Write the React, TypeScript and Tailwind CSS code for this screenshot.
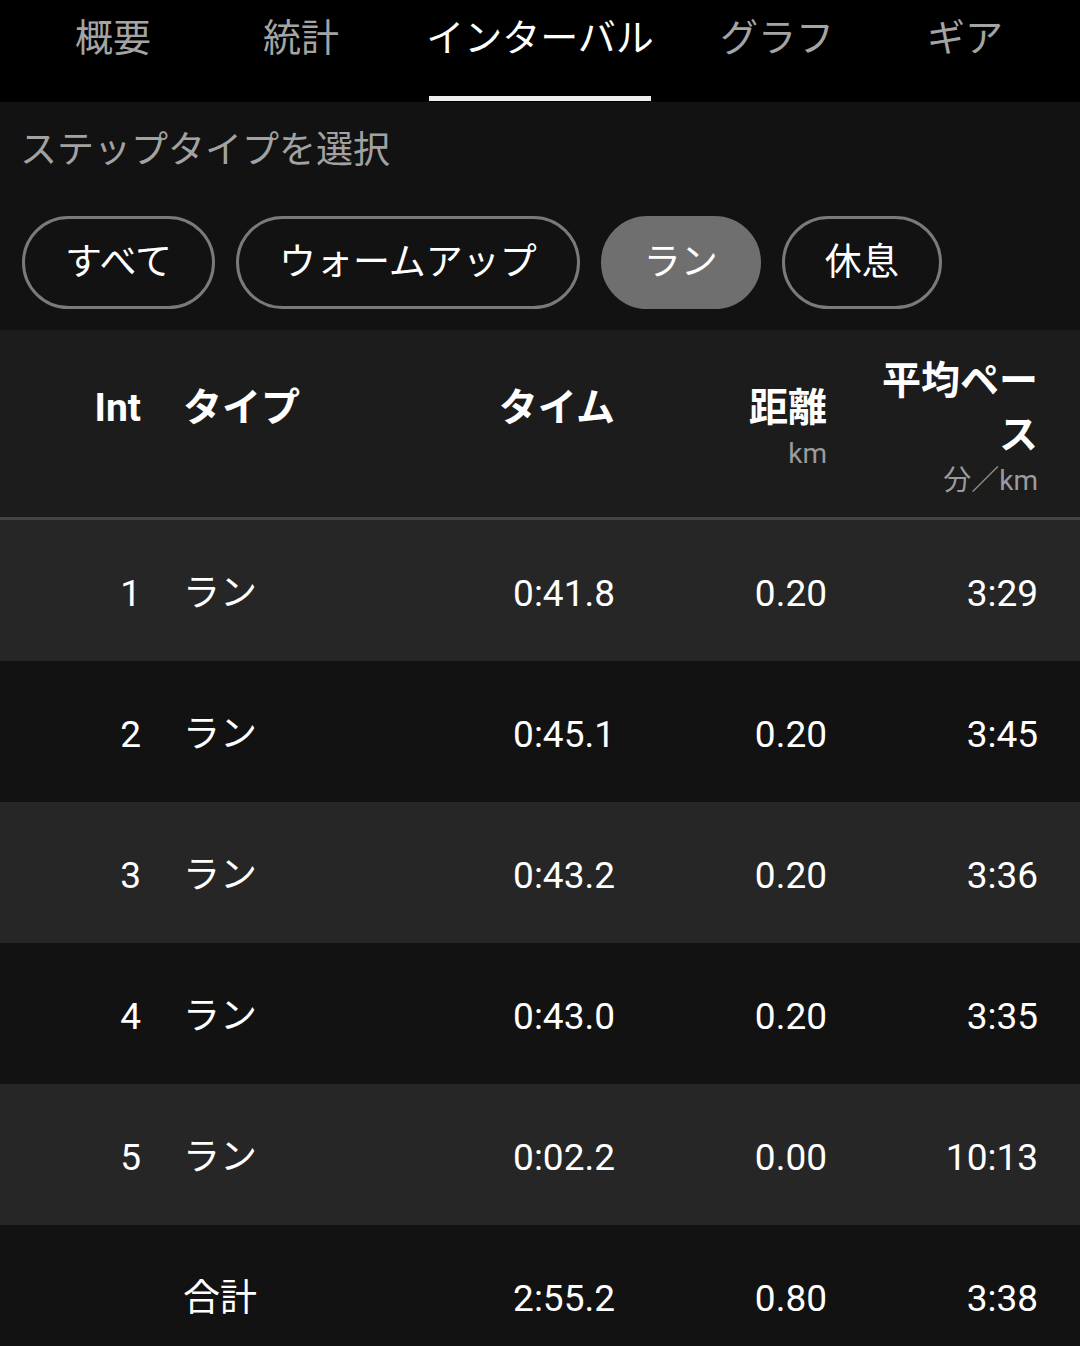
import React from 'react';

// Tab bar entries; widths are picked so each label sits where it does in the app
const tabs = [
  { label: '概要', width: 'w-[188px]' },
  { label: '統計', width: 'w-[188px]' },
  { label: 'インターバル', width: 'w-[290px]', active: true },
  { label: 'グラフ', width: 'w-[184px]' },
  { label: 'ギア', width: 'w-[192px]' },
];

const chips = [
  { label: 'すべて' },
  { label: 'ウォームアップ' },
  { label: 'ラン', active: true },
  { label: '休息' },
];

type Row = { int: string; type: string; time: string; dist: string; pace: string };

const rows: Row[] = [
  { int: '1', type: 'ラン', time: '0:41.8', dist: '0.20', pace: '3:29' },
  { int: '2', type: 'ラン', time: '0:45.1', dist: '0.20', pace: '3:45' },
  { int: '3', type: 'ラン', time: '0:43.2', dist: '0.20', pace: '3:36' },
  { int: '4', type: 'ラン', time: '0:43.0', dist: '0.20', pace: '3:35' },
  { int: '5', type: 'ラン', time: '0:02.2', dist: '0.00', pace: '10:13' },
];

const total: Row = { int: '', type: '合計', time: '2:55.2', dist: '0.80', pace: '3:38' };

const HeaderCell: React.FC<{ title: string; unit?: string; className: string }> = ({ title, unit, className }) => (
  <div className={className}>
    <div className="text-[39px] font-bold leading-[54px] text-white">{title}</div>
    <div className="text-[28px] leading-[37px] text-[#9b9b9b]">{unit || '\u00a0'}</div>
  </div>
);

const DataRow: React.FC<{ row: Row; bg: string }> = ({ row, bg }) => (
  <div className={`flex h-[141px] items-center pt-[6px] text-[37px] text-white ${bg}`}>
    <div className="w-[141px] text-right">{row.int}</div>
    <div className="ml-[42px] w-[252px]">{row.type}</div>
    <div className="w-[180px] text-right">{row.time}</div>
    <div className="w-[212px] text-right">{row.dist}</div>
    <div className="w-[211px] text-right">{row.pace}</div>
  </div>
);

export default function App() {
  return (
    <div
      className="w-[1080px] h-[1346px] overflow-hidden bg-[#121212]"
      style={{ fontFamily: 'Roboto, "Noto Sans CJK JP", sans-serif' }}
    >
      {/* Tabs */}
      <div className="flex h-[102px] bg-black pl-[19px]">
        {tabs.map((tab) => (
          <div key={tab.label} className={`relative flex h-full justify-center ${tab.width}`}>
            <span
              className={`pt-[14px] text-[38px] leading-[48px] ${tab.active ? 'text-white' : 'text-[#a4a4a4]'}`}
            >
              {tab.label}
            </span>
            {tab.active && (
              <div className="absolute bottom-[1px] left-1/2 h-[5px] w-[222px] -translate-x-1/2 bg-[#eeeeee]" />
            )}
          </div>
        ))}
      </div>

      {/* Step type filter */}
      <div className="pl-[20px] pt-[25px] text-[37px] leading-[48px] text-[#a2a2a2]">ステップタイプを選択</div>

      <div className="mt-[41px] flex gap-[21px] px-[22px]">
        {chips.map((chip) => (
          <div
            key={chip.label}
            className={`flex h-[93px] items-center rounded-full border-[3px] px-[40px] text-[37px] text-white ${
              chip.active ? 'border-[#6f6f6f] bg-[#6f6f6f]' : 'border-[#7a7a7a]'
            }`}
          >
            {chip.label}
          </div>
        ))}
      </div>

      {/* Table */}
      <div className="mt-[21px]">
        <div className="flex h-[187px] items-center bg-[#1c1c1c] pt-[6px]">
          <HeaderCell title="Int" className="w-[141px] text-right" />
          <HeaderCell title="タイプ" className="ml-[42px] w-[252px]" />
          <HeaderCell title="タイム" className="w-[180px] text-right" />
          <HeaderCell title="距離" unit="km" className="w-[212px] text-right" />
          <div className="flex w-[211px] justify-end">
            <HeaderCell title="平均ペース" unit="分／km" className="w-[160px] text-right" />
          </div>
        </div>
        <div className="h-[3px] bg-[#444444]" />
        {rows.map((row, i) => (
          <DataRow key={row.int} row={row} bg={i % 2 === 0 ? 'bg-[#262626]' : 'bg-[#121212]'} />
        ))}
        <DataRow row={total} bg="bg-[#121212]" />
      </div>
    </div>
  );
}
